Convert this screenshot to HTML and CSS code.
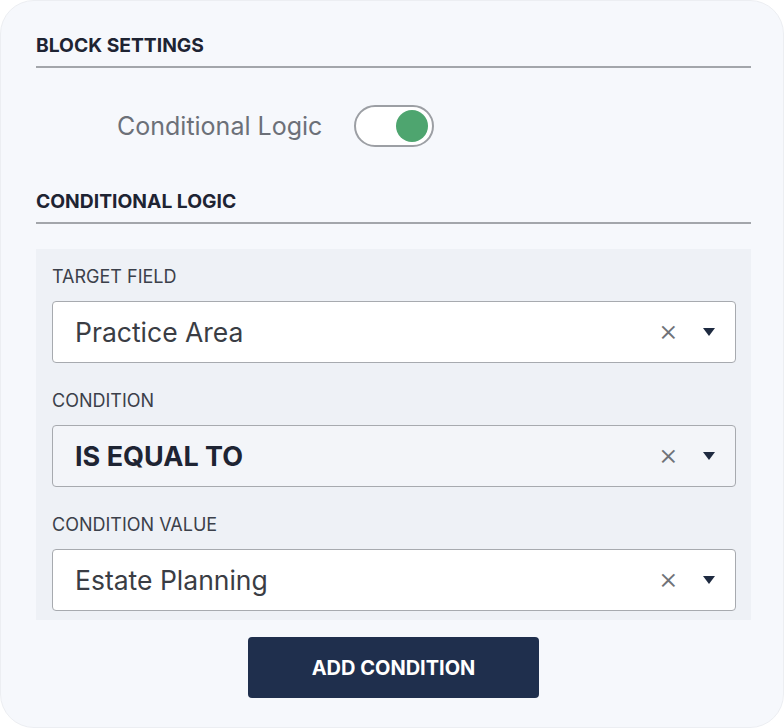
FILE: index.html
```html
<!DOCTYPE html>
<html>
<head>
<meta charset="utf-8">
<link rel="stylesheet" href="styles.css">
</head>
<body>
<div class="card">
  <div class="section-title">BLOCK SETTINGS</div>
  <div class="toggle-row">
    <span class="toggle-label">Conditional Logic</span>
    <span class="toggle"><span class="knob"></span></span>
  </div>
  <div class="section-title">CONDITIONAL LOGIC</div>
  <div class="panel">
    <div class="field-label">TARGET FIELD</div>
    <div class="select">
      <span class="value">Practice Area</span>
      <span class="clear">×</span>
      <svg class="arrow" width="14" height="10" viewBox="0 0 14 10"><path d="M1 1 H13 L7 9 Z" fill="#1e2a40"/></svg>
    </div>
    <div class="field-label">CONDITION</div>
    <div class="select alt">
      <span class="value bold">IS EQUAL TO</span>
      <span class="clear">×</span>
      <svg class="arrow" width="14" height="10" viewBox="0 0 14 10"><path d="M1 1 H13 L7 9 Z" fill="#1e2a40"/></svg>
    </div>
    <div class="field-label">CONDITION VALUE</div>
    <div class="select">
      <span class="value">Estate Planning</span>
      <span class="clear">×</span>
      <svg class="arrow" width="14" height="10" viewBox="0 0 14 10"><path d="M1 1 H13 L7 9 Z" fill="#1e2a40"/></svg>
    </div>
  </div>
  <div class="btn-row">
    <button class="btn">ADD CONDITION</button>
  </div>
</div>
</body>
</html>
```
FILE: styles.css
```css
* { box-sizing: border-box; }
html, body { margin: 0; padding: 0; background: #ffffff; }
body { font-family: Inter, Lato, "Liberation Sans", sans-serif; }
.card {
  width: 784px;
  height: 728px;
  background: #f6f8fc;
  border: 1px solid #eceef2;
  border-radius: 34px;
  padding: 33px 32px 0 35px;
}
.section-title {
  font-weight: 700;
  font-size: 19.3px;
  color: #1e2433;
  padding-bottom: 10px;
  border-bottom: 2px solid #a3a6ab;
  line-height: 22px;
}
.toggle-row {
  display: flex;
  align-items: center;
  gap: 32px;
  padding-left: 81px;
  padding-bottom: 6px;
  height: 122px;
}
.toggle-label {
  font-size: 25px;
  color: #6c7078;
}
.toggle {
  width: 80px;
  height: 42px;
  border: 2px solid #9c9fa4;
  border-radius: 21px;
  background: #fff;
  display: flex;
  align-items: center;
  justify-content: flex-end;
  padding-right: 4px;
}
.knob {
  width: 32px;
  height: 32px;
  border-radius: 50%;
  background: #4ea56f;
}
.panel {
  margin-top: 25px;
  background: #eef1f6;
  width: 715px;
  padding: 18px 15px 9px 16px;
}
.field-label {
  font-size: 18px;
  color: #3b404a;
  line-height: 20px;
  margin-bottom: 14px;
}
.select {
  height: 62px;
  background: #fff;
  border: 1.5px solid #a7aaaf;
  border-radius: 4px;
  display: flex;
  align-items: center;
  padding: 0 19px 0 22px;
  margin-bottom: 28px;
}
.select:last-child { margin-bottom: 0; }
.select.alt { background: #f3f5f9; }
.value {
  flex: 1;
  font-size: 26.5px;
  color: #3a3d44;
}
.value.bold { font-weight: 700; color: #1e2433; font-size: 27px; }
.clear {
  font-size: 30px;
  font-weight: 300;
  color: #6f7278;
  margin-right: 24px;
  margin-bottom: 4px;
  line-height: 1;
}
.btn-row {
  display: flex;
  justify-content: center;
  margin-top: 17px;
}
.btn {
  width: 291px;
  height: 61px;
  background: #1f2f4d;
  color: #fff;
  border: none;
  border-radius: 4px;
  font-family: Inter, Lato, "Liberation Sans", sans-serif;
  font-weight: 700;
  font-size: 20px;
}
```
